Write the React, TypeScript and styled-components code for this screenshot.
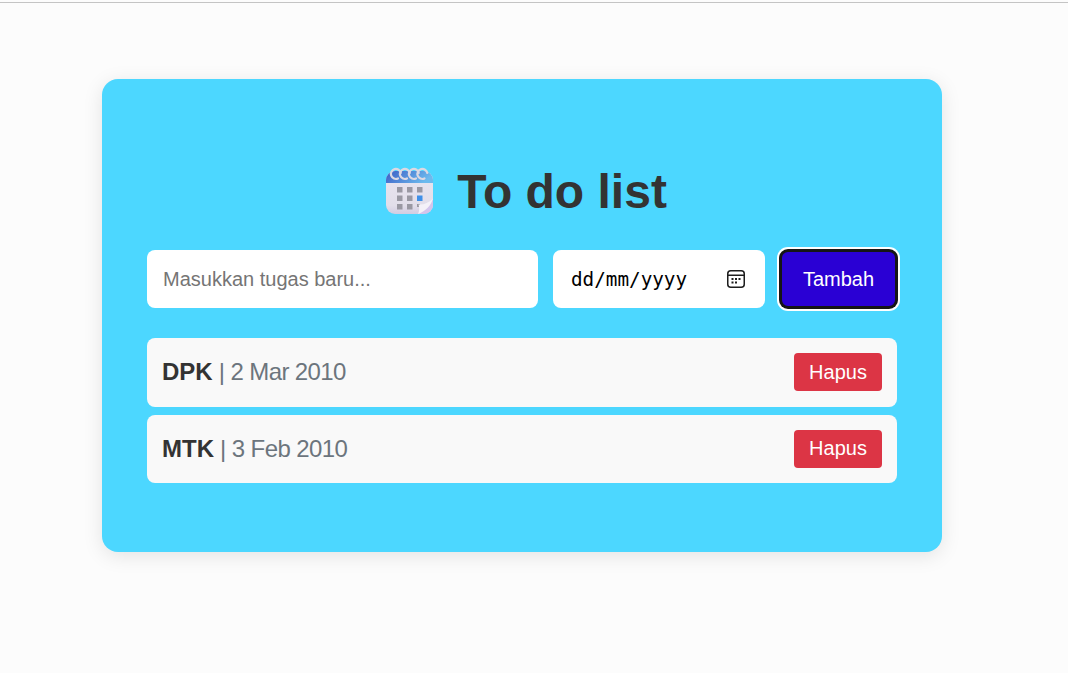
import styled, { createGlobalStyle } from "styled-components"

const GlobalStyle = createGlobalStyle`
  html, body {
    margin: 0;
    padding: 0;
    height: 100%;
    background-color: #fcfcfc;
    font-family: "Liberation Sans", Arial, sans-serif;
  }
  * {
    box-sizing: border-box;
  }
`

const tasks = [
  { name: "DPK", date: "2 Mar 2010" },
  { name: "MTK", date: "3 Feb 2010" },
]

const CalendarEmoji = () => (
  <svg width="50" height="50" viewBox="0 0 50 50">
    <defs>
      <linearGradient id="page" x1="0" y1="0" x2="0" y2="1">
        <stop offset="0" stopColor="#e9e5f0" />
        <stop offset="0.8" stopColor="#e2deea" />
        <stop offset="1" stopColor="#d2cce2" />
      </linearGradient>
      <linearGradient id="top" x1="0" y1="0" x2="1" y2="0.3">
        <stop offset="0" stopColor="#3c5cc4" />
        <stop offset="1" stopColor="#6cbaee" />
      </linearGradient>
    </defs>
    <path d="M1 14a9 9 0 0 1 9-9h29a9 9 0 0 1 9 9v25a9 9 0 0 1-9 9H10a9 9 0 0 1-9-9z" fill="url(#page)" />
    <path d="M1 17v-3a9 9 0 0 1 9-9h29a9 9 0 0 1 9 9v3z" fill="url(#top)" />
    <g fill="none" stroke="#dcd9e3" strokeWidth="2.200" strokeLinecap="round">
      <path d="M13 12.500a5 5 0 1 1 2.800-5.500" />
      <path d="M22 12.500a5 5 0 1 1 2.800-5.500" />
      <path d="M31 12.500a5 5 0 1 1 2.800-5.500" />
      <path d="M39.500 12.500a5 5 0 1 1 2.800-5.500" />
    </g>
    <g fill="#9a98a3">
      <rect x="12" y="21" width="5.500" height="5.500" />
      <rect x="22" y="21" width="5.500" height="5.500" />
      <rect x="32" y="21" width="5.500" height="5.500" />
      <rect x="12" y="29.500" width="5.500" height="5.500" />
      <rect x="22" y="29.500" width="5.500" height="5.500" />
      <rect x="12" y="38" width="5.500" height="5.500" />
      <rect x="22" y="38" width="5.500" height="5.500" />
      <rect x="32" y="38" width="3" height="3" />
    </g>
    <rect x="32" y="29.500" width="5.500" height="5.500" fill="#3f8fe8" />
    <path d="M33 48l15-15v6a9 9 0 0 1-9 9z" fill="#d3c4ec" />
    <path d="M33 48c1.500-3 1.500-6.500 .5-9.500 5 .5 10-1.500 14.500-6-2 7-7 12.500-15 15.500z" fill="#f4f1f8" />
  </svg>
)

const DateIcon = () => (
  <svg width="20" height="20" viewBox="0 0 20 20" fill="none">
    <rect x="1.750" y="1.750" width="16.500" height="16.500" rx="3" stroke="#1d1d1d" strokeWidth="1.500" />
    <path d="M2 6.250h16" stroke="#1d1d1d" strokeWidth="1.500" />
    <g fill="#1d1d1d">
      <rect x="5.500" y="9" width="2" height="2" />
      <rect x="9" y="9" width="2" height="2" />
      <rect x="12.500" y="9" width="2" height="2" />
      <rect x="5.500" y="12.500" width="2" height="2" />
      <rect x="9" y="12.500" width="2" height="2" />
    </g>
  </svg>
)

const App = () => {
  return (
    <Page>
      <GlobalStyle />
      <TopLine />
      <Card>
        <Title>
          <CalendarEmoji />
          <span>To do list</span>
        </Title>
        <Form>
          <TaskInput placeholder="Masukkan tugas baru..." />
          <DateField>
            <span>dd/mm/yyyy</span>
            <DateIcon />
          </DateField>
          <AddButton>Tambah</AddButton>
        </Form>
        <List>
          {tasks.map((task) => (
            <Item key={task.name}>
              <ItemText>
                <strong>{task.name}</strong>
                <Muted> | {task.date}</Muted>
              </ItemText>
              <DeleteButton>Hapus</DeleteButton>
            </Item>
          ))}
        </List>
      </Card>
    </Page>
  )
}

export default App

const DeleteButton = styled.button`
  width: 88px;
  height: 38px;
  border: none;
  border-radius: 4px;
  background-color: #dc3545;
  color: white;
  font-family: inherit;
  font-size: 20px;
  padding: 0;
`

const Muted = styled.span`
  color: #6c757d;
  letter-spacing: -0.6px;
`

const ItemText = styled.div`
  font-size: 24px;
  color: #333;

  strong {
    font-weight: 700;
  }
`

const Item = styled.li`
  height: 68.5px;
  padding: 0 15px;
  display: flex;
  align-items: center;
  justify-content: space-between;
  background-color: #f9f9f9;
  border-radius: 8px;
`

const List = styled.ul`
  list-style: none;
  margin: 30px 0 0;
  padding: 0;
  display: flex;
  flex-direction: column;
  gap: 8px;
`

const AddButton = styled.button`
  width: 117px;
  height: 58px;
  padding: 0;
  border: 2px solid #151515;
  border-radius: 8px;
  box-shadow: 0 0 0 1px #151515, 0 0 0 3px #ffffff;
  background-color: #2a00d4;
  color: white;
  font-family: inherit;
  font-size: 20px;
`

const DateField = styled.div`
  width: 212px;
  height: 58px;
  padding: 0 19px 0 18px;
  display: flex;
  align-items: center;
  justify-content: space-between;
  background-color: white;
  border-radius: 8px;
  font-family: "DejaVu Sans Mono", monospace;
  font-size: 19.300px;
  color: #000;
`

const TaskInput = styled.input`
  width: 391px;
  height: 58px;
  padding: 0 16px;
  border: none;
  border-radius: 8px;
  background-color: white;
  font-family: inherit;
  font-size: 20px;

  &::placeholder {
    color: #757575;
  }
`

const Form = styled.div`
  display: flex;
  gap: 15px;
`

const Title = styled.h1`
  margin: 0 0 28px;
  padding-left: 8px;
  height: 62px;
  display: flex;
  align-items: center;
  justify-content: center;
  gap: 22px;
  font-size: 48px;
  font-weight: 700;
  color: #333;
`

const Card = styled.div`
  width: 840px;
  height: 473px;
  margin: 76px 0 0 102px;
  padding: 81px 45px 0;
  background-color: #4cd7ff;
  border-radius: 16px;
  box-shadow: 0 4px 20px rgba(0, 0, 0, 0.1);
`

const TopLine = styled.div`
  height: 3px;
  border-bottom: 1px solid #c4c4c4;
  background-color: #fcfcfc;
`

const Page = styled.div`
  min-height: 100vh;
  overflow: hidden;
`
